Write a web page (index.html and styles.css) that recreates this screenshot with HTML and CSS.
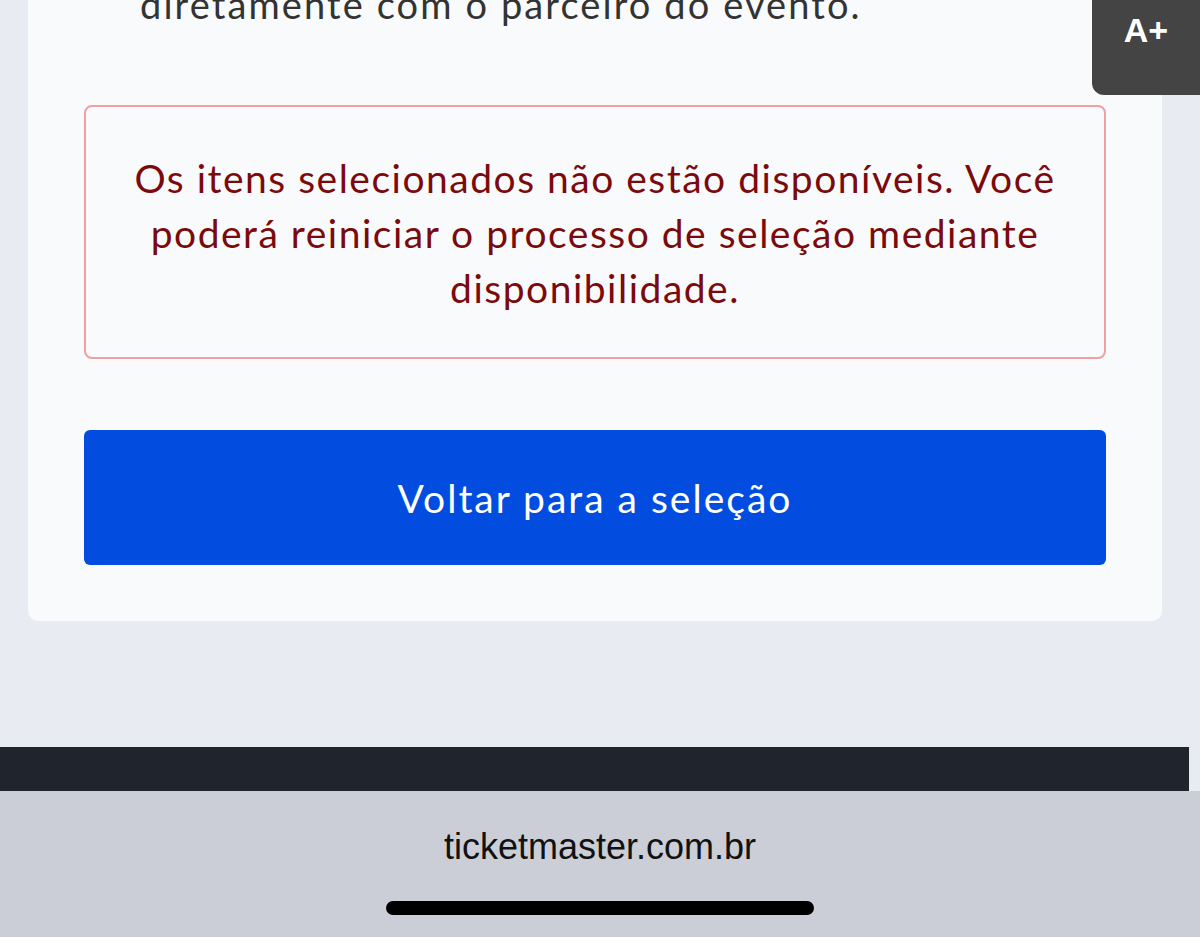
FILE: index.html
```html
<!DOCTYPE html>
<html>
  <head>
    <meta charset="utf-8">
    <title>Ticketmaster</title>
    <link rel="stylesheet" href="styles.css">
  </head>
  <body>
    <main class="page">
      <div class="card">
        <p class="intro">diretamente com o parceiro do evento.</p>
        <div class="alert">
          Os itens selecionados não estão disponíveis. Você poderá reiniciar o processo de seleção mediante disponibilidade.
        </div>
        <button class="btn-back" type="button">Voltar para a seleção</button>
      </div>
    </main>
    <footer class="site-footer"></footer>
    <div class="browser-bar">
      <div class="address">ticketmaster.com.br</div>
      <div class="home-indicator"></div>
    </div>
    <button class="font-size" type="button">A+</button>
  </body>
</html>
```

FILE: styles.css
```css
body {
  margin: 0;
  background: #e8ebf2;
  font-family: Lato, "Open Sans", sans-serif;
  overflow: hidden;
}

.page {
  padding: 0 38px 126px 28px;
}

.card {
  background: #f9fafc;
  border-radius: 0 0 10px 10px;
  margin-top: -23px;
  padding: 0 56px 56px;
}

.intro {
  margin: 0 0 73px;
  padding-left: 56px;
  color: #333;
  font-size: 38px;
  line-height: 55px;
  letter-spacing: 2.1px;
}

.alert {
  border: 2px solid #eea0a2;
  border-radius: 8px;
  padding: 44px 20px 41px;
  color: #7b0a0c;
  font-size: 39px;
  line-height: 55px;
  letter-spacing: 1.5px;
  text-align: center;
}

.btn-back {
  display: block;
  width: 100%;
  height: 135px;
  margin-top: 71px;
  border: 0;
  border-radius: 6px;
  background: #024ddf;
  color: #fff;
  font-family: inherit;
  font-size: 39px;
  letter-spacing: 2px;
}

.site-footer {
  height: 44px;
  margin-right: 11px;
  background: #20252d;
}

.browser-bar {
  height: 146px;
  background: #cbced6;
  text-align: center;
}

.address {
  padding-top: 34px;
  color: #111;
  font-family: "Liberation Sans", sans-serif;
  font-size: 36px;
  line-height: 44px;
}

.home-indicator {
  width: 428px;
  height: 14px;
  margin: 32px auto 0;
  border-radius: 7px;
  background: #000;
}

.font-size {
  position: absolute;
  top: 0;
  right: 0;
  width: 108px;
  height: 95px;
  padding: 0 0 34px;
  border: 0;
  border-radius: 0 0 0 12px;
  background: #444;
  color: #fff;
  font-family: "Liberation Sans", sans-serif;
  font-size: 34px;
  font-weight: bold;
}
```
